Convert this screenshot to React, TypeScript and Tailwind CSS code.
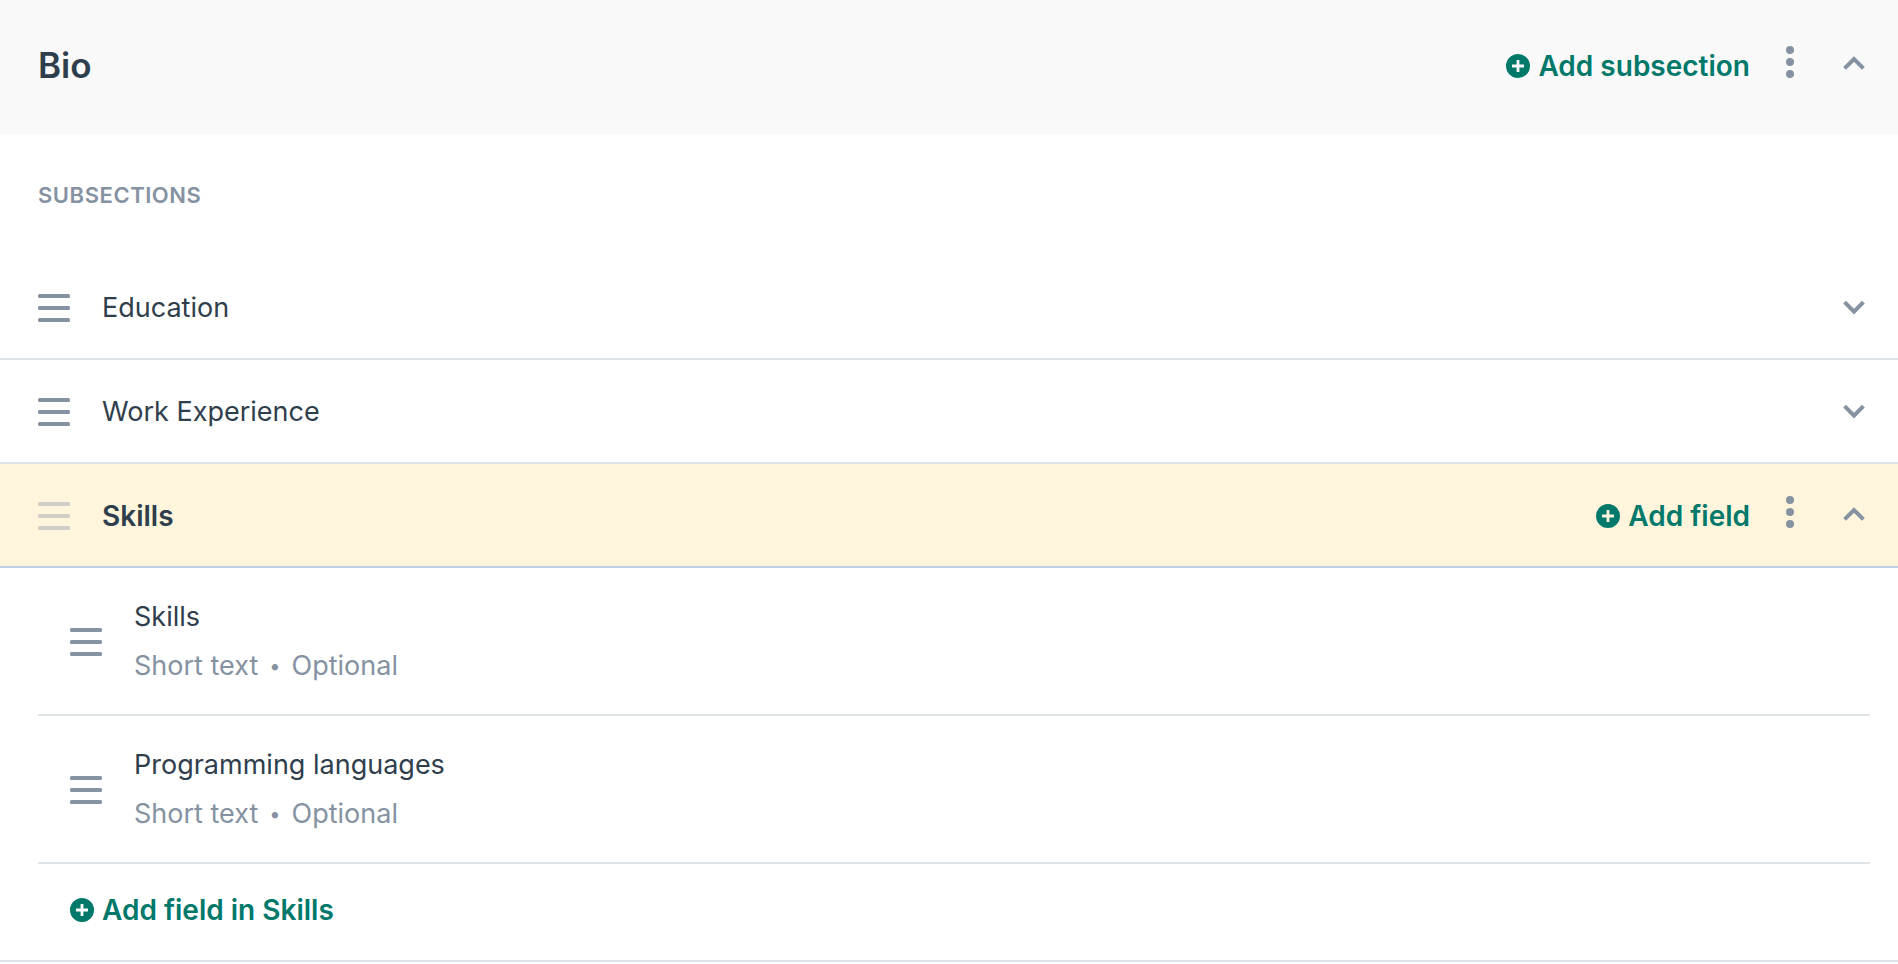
import { useState } from 'react';

type Field = { name: string; type: string; required: boolean };
type Subsection = { name: string; fields: Field[] };

const subsections: Subsection[] = [
  { name: 'Education', fields: [] },
  { name: 'Work Experience', fields: [] },
  {
    name: 'Skills',
    fields: [
      { name: 'Skills', type: 'Short text', required: false },
      { name: 'Programming languages', type: 'Short text', required: false },
    ],
  },
];

function DragHandle({ faded = false }: { faded?: boolean }) {
  return (
    <svg
      viewBox="0 0 32 32"
      className={`size-8 shrink-0 ${faded ? 'text-[#d0cec6]' : 'text-[#8592a2]'}`}
      fill="currentColor"
      aria-hidden="true"
    >
      <rect y="3" width="32" height="4" rx="1.5" />
      <rect y="15" width="32" height="4" rx="1.5" />
      <rect y="27" width="32" height="4" rx="1.5" />
    </svg>
  );
}

function Chevron({ up = false }: { up?: boolean }) {
  return (
    <svg
      viewBox="0 0 32 32"
      className="size-8"
      fill="none"
      stroke="currentColor"
      strokeWidth="4"
      aria-hidden="true"
    >
      <path d={up ? 'M6.6 20.4 16 11l9.4 9.4' : 'M6.6 11.2 16 20.6l9.4-9.4'} />
    </svg>
  );
}

function AddButton({ label }: { label: string }) {
  return (
    <button className="flex items-center gap-2 pt-0.5 text-[28px] leading-10 font-semibold text-[#00796b]">
      <svg viewBox="0 0 24 24" className="size-6 shrink-0" fill="currentColor" aria-hidden="true">
        {/* Disc with the plus cut out so the row colour shows through */}
        <path
          fillRule="evenodd"
          d="M12 0a12 12 0 1 0 0 24a12 12 0 0 0 0-24ZM10.6 6h2.8v4.6H18v2.8h-4.6V18h-2.8v-4.6H6v-2.8h4.6Z"
        />
      </svg>
      {label}
    </button>
  );
}

function MoreButton() {
  return (
    <button aria-label="More options" className="mr-8 ml-6 pb-1.5 text-[#8592a2]">
      <svg viewBox="0 0 32 32" className="size-8" fill="currentColor" aria-hidden="true">
        <circle cx="16" cy="4" r="4" />
        <circle cx="16" cy="16" r="4" />
        <circle cx="16" cy="28" r="4" />
      </svg>
    </button>
  );
}

function FieldRow({ field }: { field: Field }) {
  return (
    <li className="flex items-center gap-8 border-b-2 border-[#e0e5ea] py-6 pl-8">
      <DragHandle />
      <div className="text-[27px] leading-[49px]">
        <p>{field.name}</p>
        <p className="flex items-center gap-[11px] text-[#8592a2]">
          <span>{field.type}</span>
          <span className="text-xl">•</span>
          <span>{field.required ? 'Required' : 'Optional'}</span>
        </p>
      </div>
    </li>
  );
}

function App() {
  const [open, setOpen] = useState('Skills');
  const [expanded, setExpanded] = useState(true);

  return (
    <main className="bg-white font-['Inter',sans-serif] text-[#2f3e4c]">
      {/* Section header */}
      <header className="flex items-center bg-[#f9f9f9] pt-10 pr-7 pb-11 pl-[38px]">
        <h1 className="flex-1 text-[35px] leading-[50px] font-semibold">Bio</h1>
        <AddButton label="Add subsection" />
        <MoreButton />
        <button
          aria-label="Toggle section"
          onClick={() => setExpanded(!expanded)}
          className="pb-0.5 text-[#8592a2]"
        >
          <Chevron up={expanded} />
        </button>
      </header>

      {expanded && (
        <section>
          <h2 className="px-[38px] py-[45px] text-[22px] leading-8 font-semibold tracking-wide text-[#8592a2] uppercase">
            Subsections
          </h2>

          {subsections.map((sub) => {
            const isOpen = sub.name === open;
            return (
              <div key={sub.name}>
                <div
                  className={`flex h-[104px] items-center border-b-2 pr-7 pl-[38px] ${
                    isOpen ? 'border-[#bfcfe2] bg-[#fff5dc]' : 'border-[#e0e5ea]'
                  }`}
                >
                  <DragHandle faded={isOpen} />
                  <h3
                    className={`flex-1 pt-0.5 pl-8 leading-10 ${
                      isOpen ? 'text-[28px] font-semibold' : 'text-[27px]'
                    }`}
                  >
                    {sub.name}
                  </h3>
                  {isOpen && (
                    <>
                      <AddButton label="Add field" />
                      <MoreButton />
                    </>
                  )}
                  <button
                    aria-label={`Toggle ${sub.name}`}
                    onClick={() => setOpen(isOpen ? '' : sub.name)}
                    className="text-[#8592a2]"
                  >
                    <Chevron up={isOpen} />
                  </button>
                </div>

                {isOpen && (
                  <div className="border-b-2 border-[#e0e5ea]">
                    <ul className="pr-7 pl-[38px]">
                      {sub.fields.map((field) => (
                        <FieldRow key={field.name} field={field} />
                      ))}
                    </ul>
                    <div className="pt-6 pb-[30px] pl-[70px]">
                      <AddButton label={`Add field in ${sub.name}`} />
                    </div>
                  </div>
                )}
              </div>
            );
          })}
        </section>
      )}
    </main>
  );
}

export default App;
